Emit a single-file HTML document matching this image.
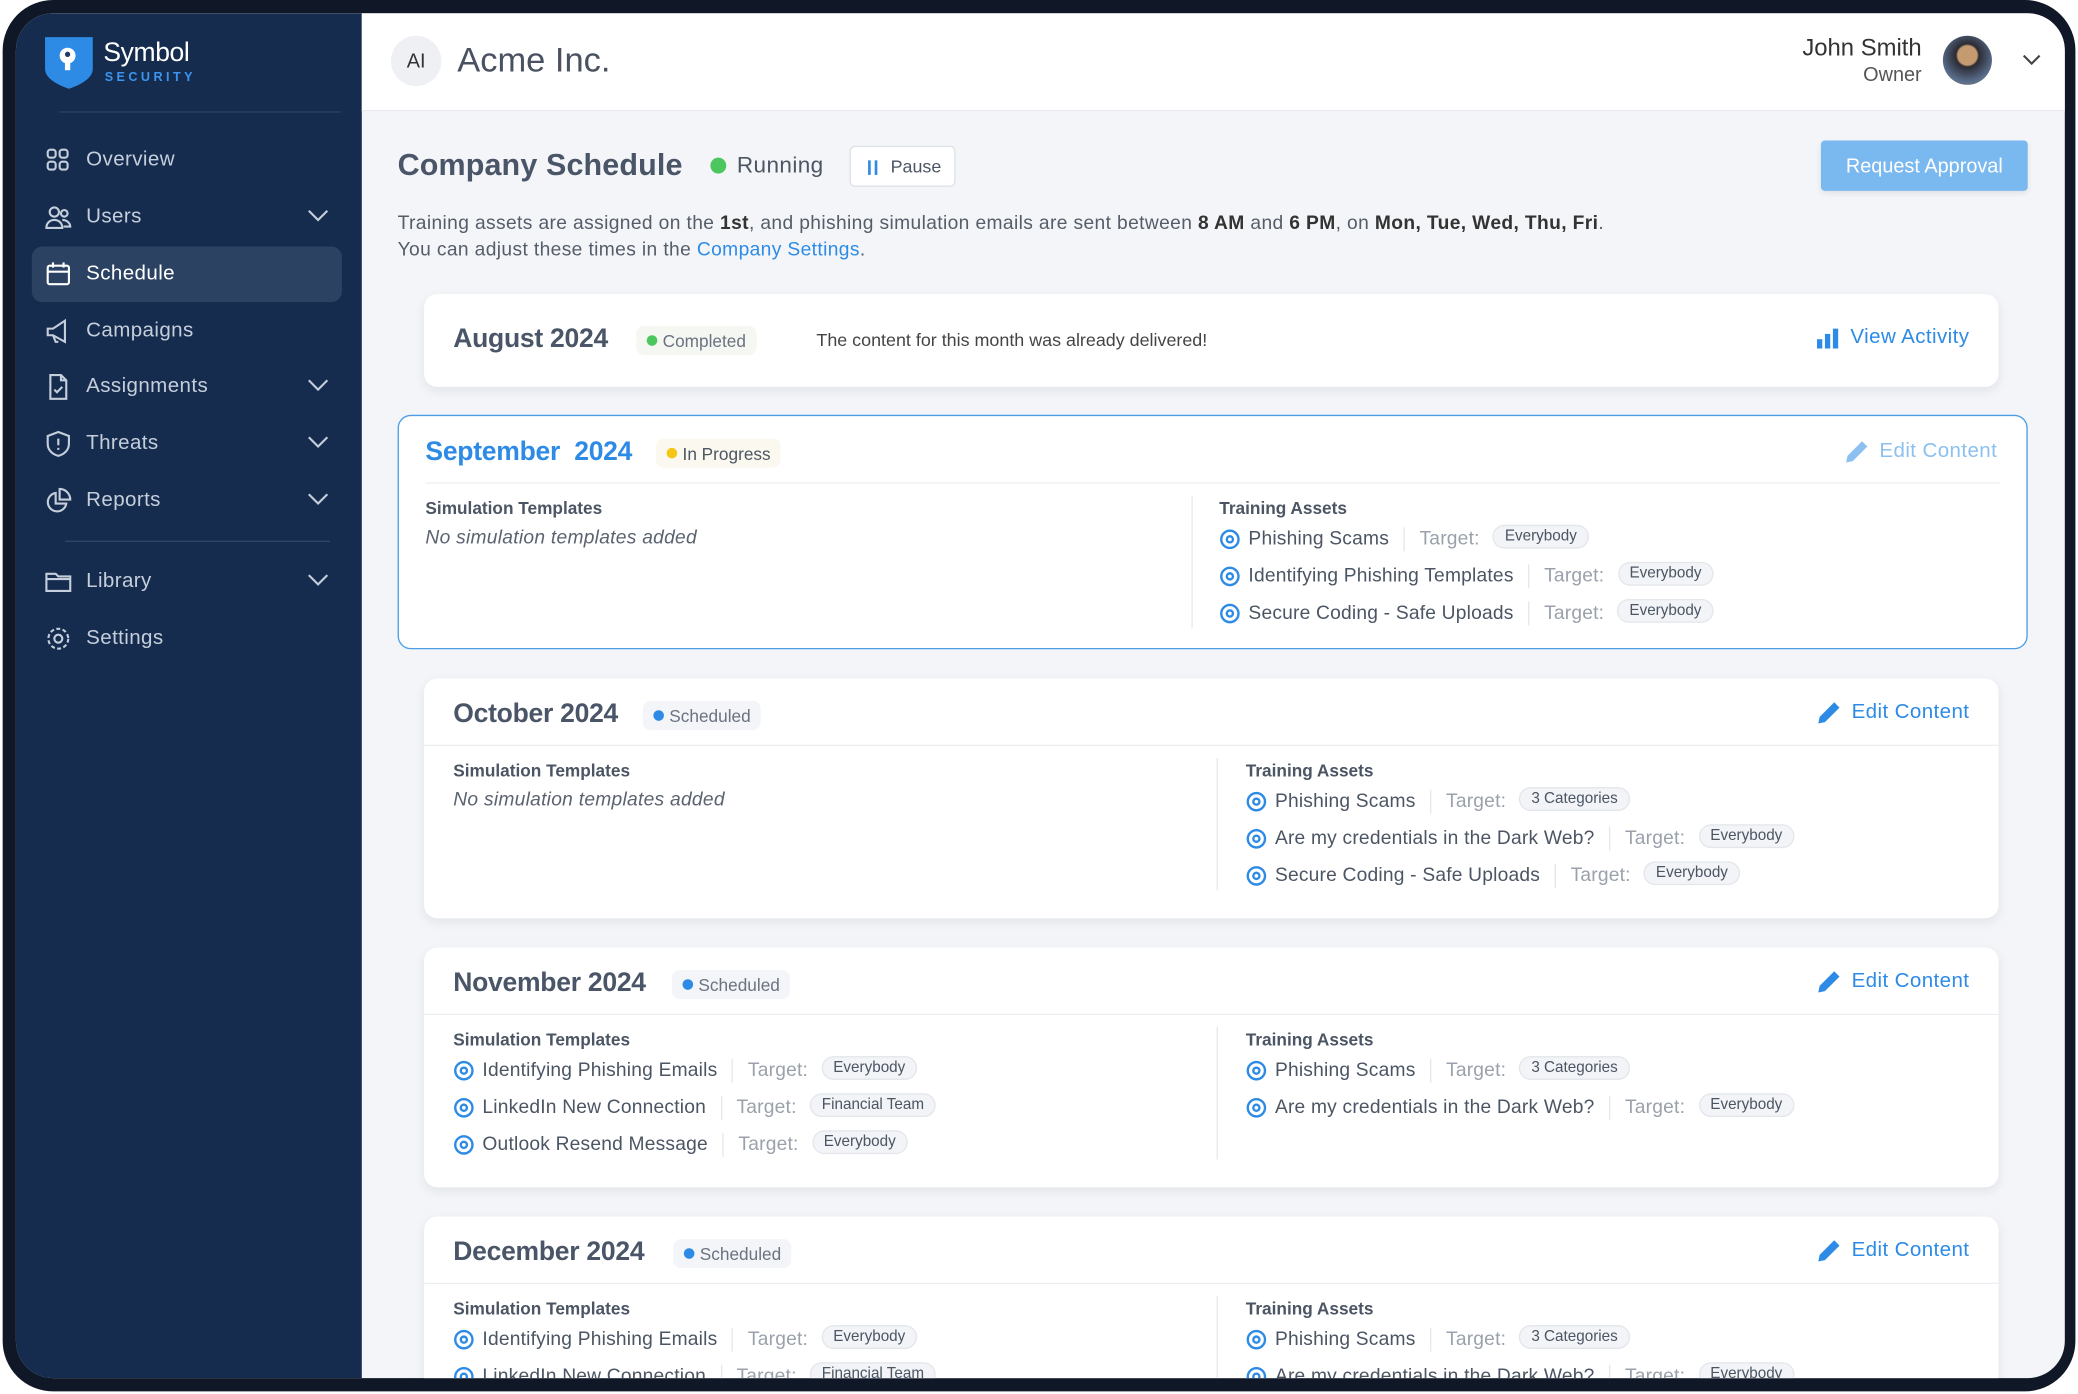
<!DOCTYPE html>
<html><head><meta charset="utf-8"><style>
*{box-sizing:border-box;margin:0;padding:0}
html,body{width:2078px;height:1394px;overflow:hidden;background:#fff}
#s{position:absolute;left:0;top:0;width:1568px;height:1052px;transform:scale(1.3253,1.3251);transform-origin:0 0;font-family:"Liberation Sans",sans-serif;color:#4b5563}
.frame{position:absolute;left:2px;top:0;width:1564px;height:1050px;background:#101827;border-radius:38px}
.inner{position:absolute;left:12px;top:10px;width:1546px;height:1030px;border-radius:28px;overflow:hidden;background:#f3f5f8}
.side{position:absolute;left:0;top:0;width:261px;height:100%;background:#152c4e}
.nav{position:absolute;left:12px;width:234px;height:42px;border-radius:8px;color:#c5cedb;font-size:15.5px;display:flex;align-items:center;padding-left:41px;letter-spacing:.3px}
.nav svg.i{position:absolute;left:10px;top:11px}
.nav .chev{position:absolute;right:10px;top:15px}
.nav.act{background:#2c4262;color:#fff}
.hdr{position:absolute;left:261px;top:0;right:0;height:74px;background:#fff;border-bottom:1px solid #e8ebf0}
.card{position:absolute;background:#fff;border-radius:10px;box-shadow:0 3px 8px rgba(30,40,60,.08)}
.mt{position:absolute;font-size:20px;font-weight:bold;color:#4a5568;letter-spacing:-.2px}
.badge{position:absolute;height:22px;border-radius:6px;font-size:13px;display:flex;align-items:center;padding:0 8px 0 20px;color:#6b7280}
.badge:before{content:"";position:absolute;left:8px;top:7px;width:8px;height:8px;border-radius:50%;background:var(--c)}
.edit{position:absolute;right:22px;font-size:15.5px;color:#2d8be6;display:flex;align-items:center;gap:8px;letter-spacing:.3px}
.hr{position:absolute;height:1px;background:#eceef2}
.vr{position:absolute;width:1px;background:#e7e9ee}
.lab{position:absolute;font-size:13px;font-weight:bold;color:#4b5563}
.none{position:absolute;font-size:14.5px;font-style:italic;color:#5b6370;letter-spacing:.2px}
.row{position:absolute;display:flex;align-items:center;font-size:14.5px;color:#4b5563;white-space:nowrap;letter-spacing:.15px}
.row svg{margin-right:6px}
.row .sep{width:1px;height:18px;background:#e5e7eb;margin:0 11px}
.row .tg{color:#9aa1ab;margin-right:10px}
.row .pill{font-size:11.5px;background:#f2f4f7;border:1px solid #e3e6ea;border-radius:10px;padding:2px 8px;color:#4b5563;position:relative;top:-2px;letter-spacing:0}
</style></head><body><div id="s">
<div class="frame"></div>
<div class="inner">
<div class="side">
  <svg style="position:absolute;left:20px;top:16px" width="40" height="42" viewBox="0 0 40 42"><path d="M2 2h36v24c0 7-9 12-18 15C11 38 2 33 2 26z" fill="#2d8be6"/><circle cx="19" cy="16" r="6" fill="#fff"/><rect x="17" y="18" width="4" height="9" fill="#fff"/><circle cx="19" cy="15" r="2" fill="#1f3a63"/></svg>
  <div style="position:absolute;left:66px;top:19px;font-size:20px;color:#fff;letter-spacing:-.3px">Symbol</div>
  <div style="position:absolute;left:67px;top:43px;font-size:9.5px;color:#3b95f0;letter-spacing:2.6px;font-weight:bold">SECURITY</div>
  <div style="position:absolute;left:33px;top:74px;width:212px;height:1px;background:#2a4165"></div>
  <div class="nav" style="top:90px"><svg class="i" width="20" height="20" viewBox="0 0 20 20" fill="none" stroke="#c5cedb" stroke-width="1.6"><rect x="2" y="2" width="6" height="6" rx="2"/><rect x="11" y="2" width="6" height="6" rx="2"/><rect x="2" y="11" width="6" height="6" rx="2"/><rect x="11" y="11" width="6" height="6" rx="2"/></svg>Overview</div>
  <div class="nav" style="top:133px"><svg class="i" width="20" height="20" viewBox="0 0 20 20" fill="none" stroke="#c5cedb" stroke-width="1.6"><circle cx="7" cy="6" r="3.5"/><circle cx="14.5" cy="7" r="2.5"/><path d="M1 18c0-4 3-6 6-6s6 2 6 6zM13 12c3 0 6 2 6 5h-5"/></svg>Users<svg class="chev" width="16" height="10" viewBox="0 0 16 10"><path d="M1 1l7 7 7-7" fill="none" stroke="#c5cedb" stroke-width="1.6"/></svg></div>
  <div class="nav act" style="top:176px"><svg class="i" width="20" height="20" viewBox="0 0 20 20" fill="none" stroke="#fff" stroke-width="1.6"><rect x="2" y="3.5" width="16" height="14" rx="1.5"/><path d="M2 8h16M6 1v4M14 1v4"/></svg>Schedule</div>
  <div class="nav" style="top:219px"><svg class="i" width="20" height="20" viewBox="0 0 20 20" fill="none" stroke="#c5cedb" stroke-width="1.6"><path d="M2 8v5h4l9 5V2L6 8zM6 13l2 5h2"/></svg>Campaigns</div>
  <div class="nav" style="top:261px"><svg class="i" width="20" height="20" viewBox="0 0 20 20" fill="none" stroke="#c5cedb" stroke-width="1.6"><path d="M4 1h8l4 4v14H4zM12 1v4h4M7 12l2 2 4-4"/></svg>Assignments<svg class="chev" width="16" height="10" viewBox="0 0 16 10"><path d="M1 1l7 7 7-7" fill="none" stroke="#c5cedb" stroke-width="1.6"/></svg></div>
  <div class="nav" style="top:304px"><svg class="i" width="20" height="20" viewBox="0 0 20 20" fill="none" stroke="#c5cedb" stroke-width="1.6"><path d="M10 1l8 3v6c0 5-4 8-8 9-4-1-8-4-8-9V4zM10 6v5M10 13v1.5"/></svg>Threats<svg class="chev" width="16" height="10" viewBox="0 0 16 10"><path d="M1 1l7 7 7-7" fill="none" stroke="#c5cedb" stroke-width="1.6"/></svg></div>
  <div class="nav" style="top:347px"><svg class="i" width="20" height="20" viewBox="0 0 20 20" fill="none" stroke="#c5cedb" stroke-width="1.6"><path d="M8 4a7 7 0 1 0 8 8H8zM11 1v8h8a8 8 0 0 0-8-8z"/></svg>Reports<svg class="chev" width="16" height="10" viewBox="0 0 16 10"><path d="M1 1l7 7 7-7" fill="none" stroke="#c5cedb" stroke-width="1.6"/></svg></div>
  <div style="position:absolute;left:37px;top:398px;width:200px;height:1px;background:#2f4669"></div>
  <div class="nav" style="top:408px"><svg class="i" width="20" height="20" viewBox="0 0 20 20" fill="none" stroke="#c5cedb" stroke-width="1.6"><path d="M1 4h7l2 2h9v11H1zM1 8h18"/></svg>Library<svg class="chev" width="16" height="10" viewBox="0 0 16 10"><path d="M1 1l7 7 7-7" fill="none" stroke="#c5cedb" stroke-width="1.6"/></svg></div>
  <div class="nav" style="top:451px"><svg class="i" width="20" height="20" viewBox="0 0 20 20" fill="none" stroke="#c5cedb" stroke-width="1.6"><circle cx="10" cy="10" r="3"/><circle cx="10" cy="10" r="7.5" stroke-dasharray="3 1.8"/></svg>Settings</div>
</div>
<div class="hdr">
  <div style="position:absolute;left:22px;top:17px;width:38px;height:38px;border-radius:50%;background:#eef0f4;font-size:15px;color:#333;display:flex;align-items:center;justify-content:center">AI</div>
  <div style="position:absolute;left:72px;top:20px;font-size:26px;color:#4a5160">Acme Inc.</div>
  <div style="position:absolute;right:108px;top:17px;font-size:18px;color:#333;text-align:right;line-height:19px">John Smith<br><span style="font-size:15px;color:#555">Owner</span></div>
  <div style="position:absolute;right:55px;top:17px;width:37px;height:37px;border-radius:50%;background:radial-gradient(circle at 50% 40%,#c49a70 0 25%,#2b2b33 30%,#5a6f8e 70%,#a07850)"></div>
  <svg style="position:absolute;right:18px;top:31px" width="14" height="9" viewBox="0 0 14 9"><path d="M1 1l6 6 6-6" fill="none" stroke="#444" stroke-width="1.6"/></svg>
</div>
<div style="position:absolute;left:288px;top:101px;font-size:23px;font-weight:bold;color:#4a5568;letter-spacing:.1px">Company Schedule</div>
<div style="position:absolute;left:524px;top:109px;width:12px;height:12px;border-radius:50%;background:#4cc65e"></div>
<div style="position:absolute;left:544px;top:105px;font-size:17px;color:#4b5563;letter-spacing:.3px">Running</div>
<div style="position:absolute;left:629px;top:100px;width:80px;height:31px;border:1px solid #dde1e7;border-radius:4px;background:#fff;font-size:13.5px;color:#4b5563;display:flex;align-items:center;padding-left:30px"><span style="position:absolute;left:13px;top:10px;height:11px;border-left:2px solid #2d8be6;border-right:2px solid #2d8be6;width:7px"></span>Pause</div>
<div style="position:absolute;left:1362px;top:96px;width:156px;height:38px;background:#7ab8f0;border-radius:3px;color:#fff;font-size:15px;display:flex;align-items:center;justify-content:center;box-shadow:0 2px 4px rgba(0,0,0,.08)">Request Approval</div>
<div style="position:absolute;left:288px;top:149px;font-size:14.5px;color:#555d69;line-height:20px;letter-spacing:.28px">Training assets are assigned on the <b style="color:#333">1st</b>, and phishing simulation emails are sent between <b style="color:#333">8 AM</b> and <b style="color:#333">6 PM</b>, on <b style="color:#333">Mon, Tue, Wed, Thu, Fri</b>.<br>You can adjust these times in the <span style="color:#2d8be6">Company Settings</span>.</div>

<!-- August -->
<div class="card" style="left:308px;top:212px;width:1188px;height:70px">
  <div class="mt" style="left:22px;top:23px">August 2024</div>
  <div class="badge" style="left:160px;top:24px;background:#f5f8f2;--c:#4cc65e">Completed</div>
  <div style="position:absolute;left:296px;top:27px;font-size:13.5px;color:#444">The content for this month was already delivered!</div>
  <div class="edit" style="top:24px"><svg width="18" height="16" viewBox="0 0 18 16"><rect x="1" y="9" width="4" height="7" fill="#2d8be6"/><rect x="7" y="5" width="4" height="11" fill="#2d8be6"/><rect x="13" y="1" width="4" height="15" fill="#2d8be6"/></svg>View Activity</div>
</div>

<!-- September -->
<div class="card" style="left:288px;top:303px;width:1230px;height:177px;border:1.5px solid #4a9de6;box-shadow:none">
  <div class="mt" style="left:20px;top:16px;color:#2d8be6">September&nbsp; 2024</div>
  <div class="badge" style="left:194px;top:17px;background:#fbf9ef;--c:#f5c518;color:#4b5563">In Progress</div>
  <div class="edit" style="top:18px;color:#8cc0f0"><svg width="18" height="18" viewBox="0 0 18 18"><path d="M13 1l4 4L6 16l-5 1 1-5z" fill="#8cc0f0"/></svg>Edit Content</div>
  <div class="hr" style="left:20px;right:20px;top:50px"></div>
  <div class="vr" style="left:598px;top:60px;height:100px"></div>
  <div class="lab" style="left:20px;top:62px">Simulation Templates</div>
  <div class="none" style="left:20px;top:84px">No simulation templates added</div>
  <div class="lab" style="left:619px;top:62px">Training Assets</div>
  <div class="row" style="left:619px;top:84px"><svg width="16" height="16" viewBox="0 0 16 16"><circle cx="8" cy="8" r="6.5" fill="none" stroke="#2d8be6" stroke-width="1.8"/><circle cx="8" cy="8" r="2.3" fill="none" stroke="#2d8be6" stroke-width="1.8"/></svg>Phishing Scams<span class="sep"></span><span class="tg">Target:</span><span class="pill">Everybody</span></div>
  <div class="row" style="left:619px;top:112px"><svg width="16" height="16" viewBox="0 0 16 16"><circle cx="8" cy="8" r="6.5" fill="none" stroke="#2d8be6" stroke-width="1.8"/><circle cx="8" cy="8" r="2.3" fill="none" stroke="#2d8be6" stroke-width="1.8"/></svg>Identifying Phishing Templates<span class="sep"></span><span class="tg">Target:</span><span class="pill">Everybody</span></div>
  <div class="row" style="left:619px;top:140px"><svg width="16" height="16" viewBox="0 0 16 16"><circle cx="8" cy="8" r="6.5" fill="none" stroke="#2d8be6" stroke-width="1.8"/><circle cx="8" cy="8" r="2.3" fill="none" stroke="#2d8be6" stroke-width="1.8"/></svg>Secure Coding - Safe Uploads<span class="sep"></span><span class="tg">Target:</span><span class="pill">Everybody</span></div>
</div>

<!-- October -->
<div class="card" style="left:308px;top:502px;width:1188px;height:181px">
  <div class="mt" style="left:22px;top:16px">October 2024</div>
  <div class="badge" style="left:165px;top:17px;background:#f3f5f8;--c:#2d8be6">Scheduled</div>
  <div class="edit" style="top:17px"><svg width="18" height="18" viewBox="0 0 18 18"><path d="M13 1l4 4L6 16l-5 1 1-5z" fill="#2d8be6"/></svg>Edit Content</div>
  <div class="hr" style="left:0;right:0;top:50px"></div>
  <div class="vr" style="left:598px;top:60px;height:100px"></div>
  <div class="lab" style="left:22px;top:62px">Simulation Templates</div>
  <div class="none" style="left:22px;top:84px">No simulation templates added</div>
  <div class="lab" style="left:620px;top:62px">Training Assets</div>
  <div class="row" style="left:620px;top:84px"><svg width="16" height="16" viewBox="0 0 16 16"><circle cx="8" cy="8" r="6.5" fill="none" stroke="#2d8be6" stroke-width="1.8"/><circle cx="8" cy="8" r="2.3" fill="none" stroke="#2d8be6" stroke-width="1.8"/></svg>Phishing Scams<span class="sep"></span><span class="tg">Target:</span><span class="pill">3 Categories</span></div>
  <div class="row" style="left:620px;top:112px"><svg width="16" height="16" viewBox="0 0 16 16"><circle cx="8" cy="8" r="6.5" fill="none" stroke="#2d8be6" stroke-width="1.8"/><circle cx="8" cy="8" r="2.3" fill="none" stroke="#2d8be6" stroke-width="1.8"/></svg>Are my credentials in the Dark Web?<span class="sep"></span><span class="tg">Target:</span><span class="pill">Everybody</span></div>
  <div class="row" style="left:620px;top:140px"><svg width="16" height="16" viewBox="0 0 16 16"><circle cx="8" cy="8" r="6.5" fill="none" stroke="#2d8be6" stroke-width="1.8"/><circle cx="8" cy="8" r="2.3" fill="none" stroke="#2d8be6" stroke-width="1.8"/></svg>Secure Coding - Safe Uploads<span class="sep"></span><span class="tg">Target:</span><span class="pill">Everybody</span></div>
</div>

<!-- November -->
<div class="card" style="left:308px;top:705px;width:1188px;height:181px">
  <div class="mt" style="left:22px;top:16px">November 2024</div>
  <div class="badge" style="left:187px;top:17px;background:#f3f5f8;--c:#2d8be6">Scheduled</div>
  <div class="edit" style="top:17px"><svg width="18" height="18" viewBox="0 0 18 18"><path d="M13 1l4 4L6 16l-5 1 1-5z" fill="#2d8be6"/></svg>Edit Content</div>
  <div class="hr" style="left:0;right:0;top:50px"></div>
  <div class="vr" style="left:598px;top:60px;height:100px"></div>
  <div class="lab" style="left:22px;top:62px">Simulation Templates</div>
  <div class="row" style="left:22px;top:84px"><svg width="16" height="16" viewBox="0 0 16 16"><circle cx="8" cy="8" r="6.5" fill="none" stroke="#2d8be6" stroke-width="1.8"/><circle cx="8" cy="8" r="2.3" fill="none" stroke="#2d8be6" stroke-width="1.8"/></svg>Identifying Phishing Emails<span class="sep"></span><span class="tg">Target:</span><span class="pill">Everybody</span></div>
  <div class="row" style="left:22px;top:112px"><svg width="16" height="16" viewBox="0 0 16 16"><circle cx="8" cy="8" r="6.5" fill="none" stroke="#2d8be6" stroke-width="1.8"/><circle cx="8" cy="8" r="2.3" fill="none" stroke="#2d8be6" stroke-width="1.8"/></svg>LinkedIn New Connection<span class="sep"></span><span class="tg">Target:</span><span class="pill">Financial Team</span></div>
  <div class="row" style="left:22px;top:140px"><svg width="16" height="16" viewBox="0 0 16 16"><circle cx="8" cy="8" r="6.5" fill="none" stroke="#2d8be6" stroke-width="1.8"/><circle cx="8" cy="8" r="2.3" fill="none" stroke="#2d8be6" stroke-width="1.8"/></svg>Outlook Resend Message<span class="sep"></span><span class="tg">Target:</span><span class="pill">Everybody</span></div>
  <div class="lab" style="left:620px;top:62px">Training Assets</div>
  <div class="row" style="left:620px;top:84px"><svg width="16" height="16" viewBox="0 0 16 16"><circle cx="8" cy="8" r="6.5" fill="none" stroke="#2d8be6" stroke-width="1.8"/><circle cx="8" cy="8" r="2.3" fill="none" stroke="#2d8be6" stroke-width="1.8"/></svg>Phishing Scams<span class="sep"></span><span class="tg">Target:</span><span class="pill">3 Categories</span></div>
  <div class="row" style="left:620px;top:112px"><svg width="16" height="16" viewBox="0 0 16 16"><circle cx="8" cy="8" r="6.5" fill="none" stroke="#2d8be6" stroke-width="1.8"/><circle cx="8" cy="8" r="2.3" fill="none" stroke="#2d8be6" stroke-width="1.8"/></svg>Are my credentials in the Dark Web?<span class="sep"></span><span class="tg">Target:</span><span class="pill">Everybody</span></div>
</div>

<!-- December -->
<div class="card" style="left:308px;top:908px;width:1188px;height:181px">
  <div class="mt" style="left:22px;top:16px">December 2024</div>
  <div class="badge" style="left:188px;top:17px;background:#f3f5f8;--c:#2d8be6">Scheduled</div>
  <div class="edit" style="top:17px"><svg width="18" height="18" viewBox="0 0 18 18"><path d="M13 1l4 4L6 16l-5 1 1-5z" fill="#2d8be6"/></svg>Edit Content</div>
  <div class="hr" style="left:0;right:0;top:50px"></div>
  <div class="vr" style="left:598px;top:60px;height:100px"></div>
  <div class="lab" style="left:22px;top:62px">Simulation Templates</div>
  <div class="row" style="left:22px;top:84px"><svg width="16" height="16" viewBox="0 0 16 16"><circle cx="8" cy="8" r="6.5" fill="none" stroke="#2d8be6" stroke-width="1.8"/><circle cx="8" cy="8" r="2.3" fill="none" stroke="#2d8be6" stroke-width="1.8"/></svg>Identifying Phishing Emails<span class="sep"></span><span class="tg">Target:</span><span class="pill">Everybody</span></div>
  <div class="row" style="left:22px;top:112px"><svg width="16" height="16" viewBox="0 0 16 16"><circle cx="8" cy="8" r="6.5" fill="none" stroke="#2d8be6" stroke-width="1.8"/><circle cx="8" cy="8" r="2.3" fill="none" stroke="#2d8be6" stroke-width="1.8"/></svg>LinkedIn New Connection<span class="sep"></span><span class="tg">Target:</span><span class="pill">Financial Team</span></div>
  <div class="lab" style="left:620px;top:62px">Training Assets</div>
  <div class="row" style="left:620px;top:84px"><svg width="16" height="16" viewBox="0 0 16 16"><circle cx="8" cy="8" r="6.5" fill="none" stroke="#2d8be6" stroke-width="1.8"/><circle cx="8" cy="8" r="2.3" fill="none" stroke="#2d8be6" stroke-width="1.8"/></svg>Phishing Scams<span class="sep"></span><span class="tg">Target:</span><span class="pill">3 Categories</span></div>
  <div class="row" style="left:620px;top:112px"><svg width="16" height="16" viewBox="0 0 16 16"><circle cx="8" cy="8" r="6.5" fill="none" stroke="#2d8be6" stroke-width="1.8"/><circle cx="8" cy="8" r="2.3" fill="none" stroke="#2d8be6" stroke-width="1.8"/></svg>Are my credentials in the Dark Web?<span class="sep"></span><span class="tg">Target:</span><span class="pill">Everybody</span></div>
</div>
</div>
</div></body></html>
